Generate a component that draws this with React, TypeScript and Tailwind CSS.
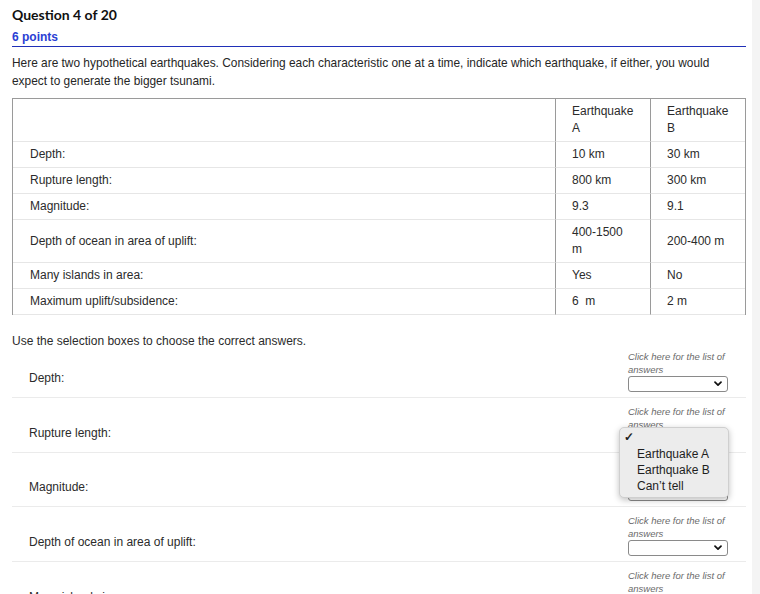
import React from "react";

const rows: { label: string; a: React.ReactNode; b: React.ReactNode }[] = [
  { label: "Depth:", a: "10 km", b: "30 km" },
  { label: "Rupture length:", a: "800 km", b: "300 km" },
  { label: "Magnitude:", a: "9.3", b: "9.1" },
  {
    label: "Depth of ocean in area of uplift:",
    a: (
      <>
        400-1500
        <br />m
      </>
    ),
    b: "200-400 m",
  },
  { label: "Many islands in area:", a: "Yes", b: "No" },
  { label: "Maximum uplift/subsidence:", a: "6\u00a0 m", b: "2 m" },
];

const answerRows = [
  "Depth:",
  "Rupture length:",
  "Magnitude:",
  "Depth of ocean in area of uplift:",
  "Many islands in area:",
];

function Chevron() {
  return (
    <svg width="8" height="6" viewBox="0 0 8 6" className="block">
      <path d="M1 1.2 L4 4.2 L7 1.2" fill="none" stroke="#111" strokeWidth="1.7" strokeLinecap="round" strokeLinejoin="round" />
    </svg>
  );
}

function SelectBox() {
  return (
    <div className="flex h-[16px] w-[100px] items-center justify-end rounded-[3px] border border-[#8a8a8a] bg-white pr-[5px]">
      <Chevron />
    </div>
  );
}

function Popup() {
  return (
    <div className="absolute left-[-9px] top-[29px] z-10 h-[71px] w-[110px] rounded-[5px] border border-[#cfcfcf] bg-[#ececec] shadow-[0_2px_6px_rgba(0,0,0,0.25)] font-['Liberation_Sans',Arial,sans-serif] text-[12px] leading-[16px] text-[#1e1e1e]">
      <div className="pl-[4px] pt-[2px] text-[12px] font-bold leading-[14px]">✓</div>
      <div className="pl-[17px] pt-[2px]">
        <div>Earthquake A</div>
        <div>Earthquake B</div>
        <div>Can’t tell</div>
      </div>
    </div>
  );
}

export default function App() {
  return (
    <div className="flex h-[594px] w-[760px] overflow-hidden bg-white font-['Liberation_Sans',Arial,sans-serif] text-[#2b2b2b]">
      <div className="w-[746px] shrink-0 pl-[12px]">
        <div className="pt-[6px] font-['Lato',sans-serif] text-[14px] font-bold leading-[18px] text-[#111]">
          Question 4 of 20
        </div>
        <div className="mt-[6px] border-b-[1.5px] border-[#2030b8] pb-[1px] text-[12px] font-bold leading-[15px] text-[#2a40d4]">
          6 points
        </div>
        <p className="mt-[7px] text-[11.9px] leading-[18px] text-[#262626]">
          Here are two hypothetical earthquakes. Considering each characteristic one at a time, indicate which earthquake, if either, you would expect to generate the bigger tsunami.
        </p>

        <div className="mt-[8px] grid grid-cols-[1fr_95px_95px] border-l border-r border-t border-[#9a9a9a] text-[12px] leading-[17px] text-[#2b2b2b]">
          <div className="border-b border-[#e6e6e6]" />
          <div className="flex items-center border-b border-l border-b-[#e6e6e6] border-l-[#9a9a9a] px-[16px] py-[4px]">
            <span>
              Earthquake
              <br />A
            </span>
          </div>
          <div className="flex items-center border-b border-l border-b-[#e6e6e6] border-l-[#9a9a9a] px-[16px] py-[4px]">
            <span>
              Earthquake
              <br />B
            </span>
          </div>
          {rows.map((r) => (
            <React.Fragment key={r.label}>
              <div className="flex items-center border-b border-[#e6e6e6] px-[17px] py-[4px]">{r.label}</div>
              <div className="flex items-center border-b border-l border-b-[#e6e6e6] border-l-[#9a9a9a] px-[16px] py-[4px]">
                <span>{r.a}</span>
              </div>
              <div className="flex items-center border-b border-l border-b-[#e6e6e6] border-l-[#9a9a9a] px-[16px] py-[4px]">
                <span>{r.b}</span>
              </div>
            </React.Fragment>
          ))}
        </div>

        <div className="mt-[19px] text-[12px] leading-[14px] text-[#2b2b2b]">
          Use the selection boxes to choose the correct answers.
        </div>

        <div className="-mt-[5px]">
          {answerRows.map((label, i) => (
            <div key={label} className="flex h-[54.8px] items-end justify-between border-b border-[#ebebeb] pr-[18px]">
              <div className="mb-[10px] pl-[17px] text-[12px] leading-[17px] text-[#2b2b2b]">{label}</div>
              <div className="relative pb-[5px] pt-[7px]">
                <div className="text-[9.5px] italic leading-[13px] text-[#6b6b6b]">
                  Click here for the list of
                  <br />
                  answers
                </div>
                <SelectBox />
                {i === 1 && <Popup />}
              </div>
            </div>
          ))}
        </div>
      </div>
      <div className="ml-[6px] h-full w-[8px] bg-[#f4f4f4]" />
    </div>
  );
}
